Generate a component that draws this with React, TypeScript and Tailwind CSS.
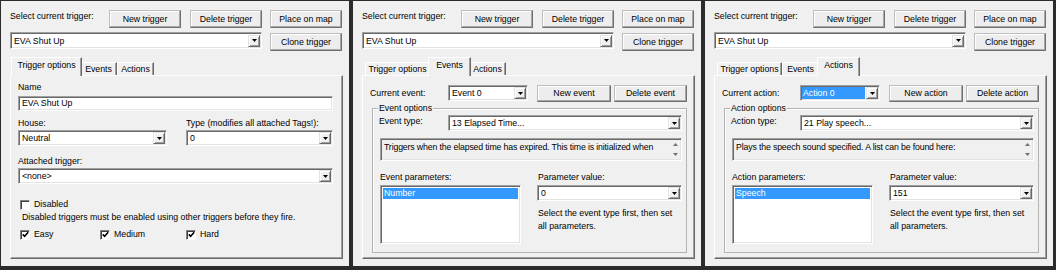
import React from "react";

const sunken =
  "border border-[#a0a0a0] border-r-white border-b-white shadow-[inset_1px_1px_0_#696969,inset_-1px_-1px_0_#e3e3e3]";
const raised =
  "border border-[#e3e3e3] border-r-[#696969] border-b-[#696969] shadow-[inset_1px_1px_0_#fff,inset_-1px_-1px_0_#a0a0a0]";

function Btn({ label, className }: { label: string; className: string }) {
  return (
    <div
      className={`flex items-center justify-center bg-[#ededed] border border-[#bdbdbd] border-r-[#707070] border-b-[#707070] shadow-[inset_-1px_-1px_0_#a8a8a8,inset_1px_1px_0_#fff] whitespace-nowrap ${className}`}
    >
      {label}
    </div>
  );
}

function Arrow() {
  return (
    <div className={`flex items-center justify-center w-[12px] h-[12px] shrink-0 bg-[#f0f0f0] ${raised}`}>
      <svg width="5" height="3" viewBox="0 0 5 3">
        <polygon points="0,0 5,0 2.5,3" fill="#000" />
      </svg>
    </div>
  );
}

function Combo({
  value,
  className,
  highlight = false,
}: {
  value: string;
  className: string;
  highlight?: boolean;
}) {
  return (
    <div className={`flex items-center bg-white pl-[1px] pr-[1px] ${sunken} ${className}`}>
      <div className="flex-1 min-w-0 flex items-center pr-[1px]">
        <span
          className={
            highlight
              ? "w-full bg-[#3399ff] text-white pl-[1px] leading-[12px] whitespace-nowrap"
              : "pl-[2px] leading-[12px] whitespace-nowrap"
          }
        >
          {value}
        </span>
      </div>
      <Arrow />
    </div>
  );
}

function Check({ label, checked, className = "" }: { label: string; checked: boolean; className?: string }) {
  return (
    <div className={`flex items-center ${className}`}>
      <div className="flex items-center justify-center w-[10px] h-[10px] bg-white border border-[#808080] border-r-white border-b-white shadow-[inset_1px_1px_0_#404040]">
        {checked && (
          <svg width="7" height="7" viewBox="0 0 7 7">
            <path d="M0.8 3.4 L2.6 5.3 L6.2 1.2" stroke="#000" strokeWidth="1.6" fill="none" />
          </svg>
        )}
      </div>
      <span className="ml-[4px]">{label}</span>
    </div>
  );
}

const tabDefs = [
  { label: "Trigger options", w: "w-[65px]" },
  { label: "Events", w: "w-[37px]" },
  { label: "Actions", w: "w-[37px]" },
];

function Tabs({ active }: { active: number }) {
  return (
    <div className="flex items-end h-[15px] pl-[3px] mt-[9px]">
      {tabDefs.map((t, i) =>
        i === active ? (
          <div
            key={t.label}
            className={`${t.w} relative z-10 -mx-[2px] -mb-px box-content px-[2px] h-[16px] flex justify-center pt-[2px] bg-[#f0f0f0] border-l border-t border-white border-r border-r-[#696969] shadow-[inset_-1px_0_0_#a0a0a0]`}
          >
            {t.label}
          </div>
        ) : (
          <div
            key={t.label}
            className={`${t.w} h-[13px] flex justify-center pt-[1px] bg-[#f0f0f0] border-l border-t border-white border-r border-r-[#696969] shadow-[inset_-1px_0_0_#a0a0a0]`}
          >
            {t.label}
          </div>
        )
      )}
    </div>
  );
}

function TriggerOptions() {
  return (
    <div className="pl-[7px] pt-[6px]">
      <div>Name</div>
      <div className={`mt-[3px] w-[315px] h-[15px] bg-white pl-[3px] flex items-center ${sunken}`}>EVA Shut Up</div>
      <div className="flex mt-[7px]">
        <div className="w-[168px]">
          <div>House:</div>
          <Combo className="mt-[1px] w-[149px] h-[16px]" value="Neutral" />
        </div>
        <div>
          <div>Type (modifies all attached Tags!):</div>
          <Combo className="mt-[1px] w-[147px] h-[16px]" value="0" />
        </div>
      </div>
      <div className="mt-[10px]">Attached trigger:</div>
      <Combo className="mt-[1px] w-[315px] h-[16px]" value="<none>" />
      <Check className="mt-[15px] ml-[2px]" label="Disabled" checked={false} />
      <div className="mt-[2px] ml-[4px]">Disabled triggers must be enabled using other triggers before they fire.</div>
      <div className="flex mt-[6px] ml-[2px]">
        <Check className="w-[80px]" label="Easy" checked />
        <Check className="w-[86px]" label="Medium" checked />
        <Check label="Hard" checked />
      </div>
    </div>
  );
}

function ParamsTab({
  kind,
  current,
  type,
  desc,
  param,
  value,
}: {
  kind: "event" | "action";
  current: string;
  type: string;
  desc: string;
  param: string;
  value: string;
}) {
  const Kind = kind === "event" ? "Event" : "Action";
  return (
    <div className="pl-[7px] pt-[9px]">
      <div className="flex items-start">
        <div className="w-[78px] pt-[3px]">Current {kind}:</div>
        <Combo className="w-[80px] h-[16px]" value={current} highlight={kind === "action"} />
        <Btn className="ml-[9px] w-[74px] h-[17px]" label={`New ${kind}`} />
        <Btn className="ml-[3px] w-[73px] h-[17px]" label={`Delete ${kind}`} />
      </div>
      <div className="relative mt-[6px] ml-[2px] w-[315px] border border-[#b4b4b4] shadow-[inset_1px_1px_0_#fff] pl-[6px] pt-[6px] pb-[8px]">
        <span className="absolute -top-[6px] left-[5px] bg-[#f0f0f0] px-px">{Kind} options</span>
        <div className="flex items-start">
          <div className="w-[69px] pt-[1px]">{Kind} type:</div>
          <Combo className="w-[234px] h-[16px]" value={type} />
        </div>
        <div className={`flex mt-[7px] ml-[1px] w-[302px] h-[23px] bg-[#f0f0f0] ${sunken}`}>
          <div className="flex-1 min-w-0 whitespace-nowrap pl-[3px] pt-[3px] tracking-[-0.15px]">{desc}</div>
          <div className="w-[11px] shrink-0 flex flex-col items-center justify-between py-[4px]">
            <svg width="5" height="3" viewBox="0 0 5 3">
              <polygon points="0,3 5,3 2.5,0" fill="#707070" />
            </svg>
            <svg width="5" height="3" viewBox="0 0 5 3">
              <polygon points="0,0 5,0 2.5,3" fill="#707070" />
            </svg>
          </div>
        </div>
        <div className="flex mt-[11px] ml-[1px]">
          <div className="w-[157px]">
            <div>{Kind} parameters:</div>
            <div className={`mt-[2px] w-[141px] h-[59px] bg-white p-[2px] ${sunken}`}>
              <div className="bg-[#3399ff] text-white pl-[1px] leading-[11px]">{param}</div>
            </div>
          </div>
          <div>
            <div className="pl-px">Parameter value:</div>
            <Combo className="mt-[2px] w-[145px] h-[16px]" value={value} />
            <div className="mt-[6px] pl-px leading-[13px]">
              Select the event type first, then set
              <br />
              all parameters.
            </div>
          </div>
        </div>
      </div>
    </div>
  );
}

function Window({ tab }: { tab: number }) {
  return (
    <div className="w-[352px] h-[270px] pt-px pl-px">
      <div className="w-[348px] h-[265px] bg-[#f0f0f0] pt-[9px] pl-[9px]">
        <div className="flex items-start">
          <div className="w-[99px] pt-[1px]">Select current trigger:</div>
          <Btn className="w-[72px] h-[18px]" label="New trigger" />
          <Btn className="w-[72px] h-[18px] ml-[9px]" label="Delete trigger" />
          <Btn className="w-[72px] h-[18px] ml-[8px]" label="Place on map" />
        </div>
        <div className="flex items-start mt-[4px]">
          <Combo className="w-[252px] h-[17px]" value="EVA Shut Up" />
          <Btn className="w-[72px] h-[18px] ml-[8px] mt-[1px]" label="Clone trigger" />
        </div>
        <Tabs active={tab} />
        <div className="w-[333px] h-[184px] bg-[#f0f0f0] border border-white border-r-[#696969] border-b-[#696969] shadow-[inset_-1px_-1px_0_#a0a0a0]">
          {tab === 0 && <TriggerOptions />}
          {tab === 1 && (
            <ParamsTab
              kind="event"
              current="Event 0"
              type="13 Elapsed Time..."
              desc="Triggers when the elapsed time has expired. This time is initialized when"
              param="Number"
              value="0"
            />
          )}
          {tab === 2 && (
            <ParamsTab
              kind="action"
              current="Action 0"
              type="21 Play speech..."
              desc="Plays the speech sound specified. A list can be found here:"
              param="Speech"
              value="151"
            />
          )}
        </div>
      </div>
    </div>
  );
}

export default function App() {
  return (
    <div className="flex w-[1056px] h-[270px] bg-[#2b2b2b] font-['Liberation_Sans',Arial,sans-serif] text-[8.75px] leading-[11px] text-black">
      <Window tab={0} />
      <Window tab={1} />
      <Window tab={2} />
    </div>
  );
}
